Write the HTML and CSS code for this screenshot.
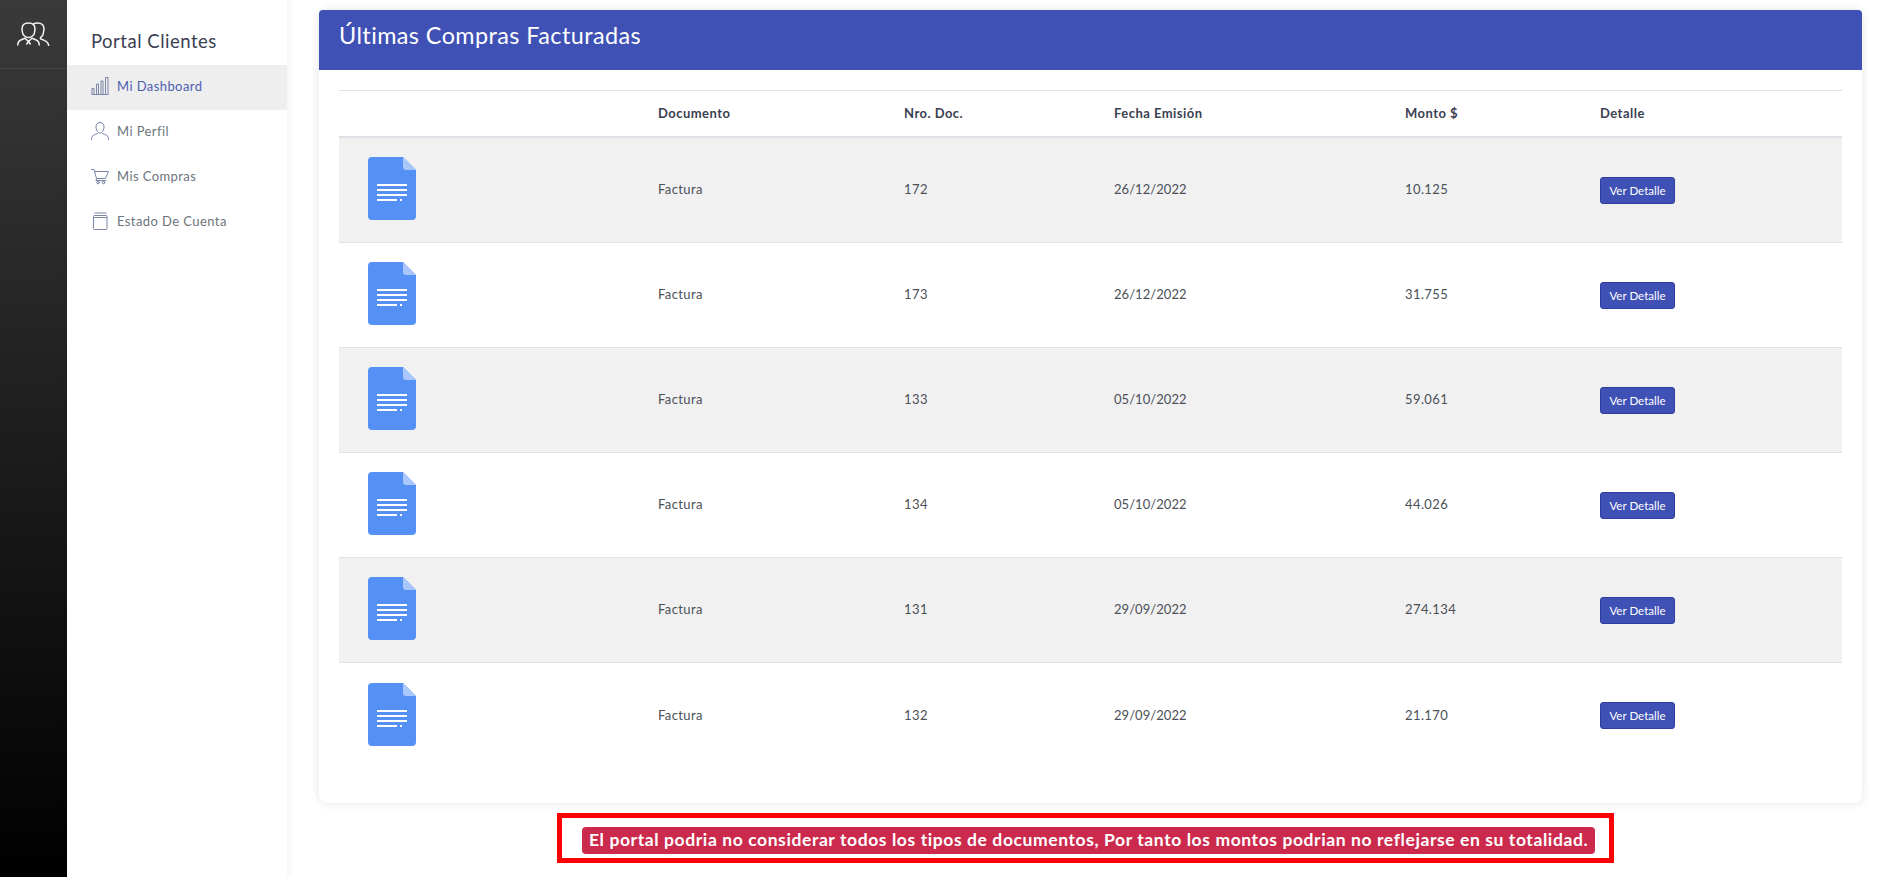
FILE: index.html
```html
<!DOCTYPE html>
<html lang="es">
<head>
<meta charset="utf-8">
<title>Portal Clientes</title>
<link rel="stylesheet" href="styles.css">
</head>
<body>
<svg class="defs" width="0" height="0" aria-hidden="true">
  <symbol id="doc" viewBox="0 0 48 63">
    <path d="M4 0H35L48 13V59a4 4 0 0 1-4 4H4a4 4 0 0 1-4-4V4a4 4 0 0 1 4-4Z" fill="#5591f5"/>
    <path d="M35 0L48 13H38a3 3 0 0 1-3-3Z" fill="#a9c7fa"/>
    <path d="M9 27H39V29H9ZM9 32H39V34H9ZM9 37H39V39H9ZM9 42H29V44H9ZM32 42H34V44H32Z" fill="#fff"/>
  </symbol>
</svg>
<div class="app">
  <aside class="rail">
    <div class="rail-logo">
      <svg class="rail-icon" viewBox="0 0 33 24" fill="none" stroke="#f2f2f2" stroke-width="1.500" stroke-linecap="round" stroke-linejoin="round">
        <path d="M11.500 1C7.500 1 5 3 5 7c0 1.500.5 2.500.5 3.500 0 2 2.500 5 6 5s6-3 6-5c0-1 .5-2 .5-3.500 0-4-2.500-6-6.500-6Z"/>
        <path d="M.8 23c0-3 1.500-4.500 3.500-5.200l3.700-1.600 3.500 3.300 3.500-3.300 3.700 1.600c2 .7 3.500 2.200 3.500 5.200"/>
        <path d="M11.500 19.500l-1.800 2.500M11.500 19.500l1.800 2.500"/>
        <path d="M16.500 2c1.200-.7 2.500-1 4-1 4 0 6.500 2 6.500 6 0 1.500-.5 2.500-.5 3.500 0 1.800-1.200 3.700-3 5v1.200l3.200 1.400c2.800 1.200 5 2.700 5 5.900"/>
      </svg>
    </div>
  </aside>
  <nav class="sidebar">
    <h1 class="brand">Portal Clientes</h1>
    <ul class="menu">
      <li class="menu-item active">
        <svg class="menu-icon" viewBox="0 0 18 18" fill="none" stroke="#7d86a8" stroke-width="1"><path d="M.5 17.500h17M1 17.500v-6h2v6M5.500 17.500V7h2v10.500M10 17.500V4h2v13.500M14.500 17.500V.5h2.500v17"/></svg>
        <span>Mi Dashboard</span>
      </li>
      <li class="menu-item">
        <svg class="menu-icon" viewBox="0 0 18 18" fill="none" stroke="#7d86a8" stroke-width="1" stroke-linecap="round"><path d="M9 .5C6 .5 5 2.500 5 5c0 2.500 1.500 6 4 6s4-3.500 4-6c0-2.500-1-4.500-4-4.500Z"/><path d="M.5 17.500c0-3 1-4 3-4.700l3-1.300M17.500 17.500c0-3-1-4-3-4.700l-3-1.300"/></svg>
        <span>Mi Perfil</span>
      </li>
      <li class="menu-item">
        <svg class="menu-icon" viewBox="0 0 18 18" fill="none" stroke="#7d86a8" stroke-width="1" stroke-linecap="round" stroke-linejoin="round"><path d="M.5 2.500H3l2.500 9h9l3-7H4"/><path d="M5.500 11.500l-.5 2h10"/><circle cx="7" cy="15.500" r="1.300"/><circle cx="12.500" cy="15.500" r="1.300"/></svg>
        <span>Mis Compras</span>
      </li>
      <li class="menu-item">
        <svg class="menu-icon" viewBox="0 0 18 18" fill="none" stroke="#7d86a8" stroke-width="1"><rect x="2.500" y="3.500" width="13.500" height="14" rx="1"/><path d="M3.500 1h12M2.500 5.500H16"/></svg>
        <span>Estado De Cuenta</span>
      </li>
    </ul>
  </nav>
  <main class="main">
    <section class="card">
      <header class="card-head">Últimas Compras Facturadas</header>
      <div class="card-body">
        <table class="grid">
          <colgroup>
            <col class="c-icon"><col class="c-doc"><col class="c-nro"><col class="c-date"><col class="c-amount"><col class="c-action">
          </colgroup>
          <thead>
            <tr><th></th><th>Documento</th><th>Nro. Doc.</th><th>Fecha Emisión</th><th>Monto $</th><th>Detalle</th></tr>
          </thead>
          <tbody>
            <tr><td class="cell-icon"><svg class="doc"><use href="#doc"/></svg></td><td>Factura</td><td>172</td><td class="cell-date">26/12/2022</td><td>10.125</td><td class="cell-action"><a class="btn">Ver Detalle</a></td></tr>
            <tr><td class="cell-icon"><svg class="doc"><use href="#doc"/></svg></td><td>Factura</td><td>173</td><td class="cell-date">26/12/2022</td><td>31.755</td><td class="cell-action"><a class="btn">Ver Detalle</a></td></tr>
            <tr><td class="cell-icon"><svg class="doc"><use href="#doc"/></svg></td><td>Factura</td><td>133</td><td class="cell-date">05/10/2022</td><td>59.061</td><td class="cell-action"><a class="btn">Ver Detalle</a></td></tr>
            <tr><td class="cell-icon"><svg class="doc"><use href="#doc"/></svg></td><td>Factura</td><td>134</td><td class="cell-date">05/10/2022</td><td>44.026</td><td class="cell-action"><a class="btn">Ver Detalle</a></td></tr>
            <tr><td class="cell-icon"><svg class="doc"><use href="#doc"/></svg></td><td>Factura</td><td>131</td><td class="cell-date">29/09/2022</td><td>274.134</td><td class="cell-action"><a class="btn">Ver Detalle</a></td></tr>
            <tr><td class="cell-icon"><svg class="doc"><use href="#doc"/></svg></td><td>Factura</td><td>132</td><td class="cell-date">29/09/2022</td><td>21.170</td><td class="cell-action"><a class="btn">Ver Detalle</a></td></tr>
          </tbody>
        </table>
      </div>
    </section>
    <div class="notice"><span class="badge">El portal podria no considerar todos los tipos de documentos, Por tanto los montos podrian no reflejarse en su totalidad.</span></div>
  </main>
</div>
</body>
</html>
```
FILE: styles.css
```css
* { box-sizing: border-box; }
html, body { margin: 0; height: 100%; overflow: hidden; }
body { font-family: "Lato", "Noto Sans", sans-serif; color: #495057; background: #fff; }
.defs { position: absolute; }
.app { display: flex; height: 877px; }

.rail { width: 67px; flex: none; background: linear-gradient(#3a3a3a, #000); }
.rail-logo { height: 69px; border-bottom: 1px solid #444; display: flex; justify-content: center; padding-top: 22px; }
.rail-icon { width: 33px; height: 24px; }

.sidebar { width: 220px; flex: none; background: #fff; box-shadow: 2px 0 8px rgba(0,0,0,.06); }
.brand { margin: 0; height: 65px; padding: 29px 0 0 24px; font-size: 18.500px; line-height: 24px; font-weight: 400; color: #3b4052; letter-spacing: .5px; }
.menu { list-style: none; margin: 0; padding: 0; }
.menu-item { height: 44.800px; display: flex; align-items: center; gap: 8px; padding: 0 0 2px 24px; font-size: 13px; color: #6c757d; letter-spacing: .42px; }
.menu-item.active { background: #eee; color: #4d5eb0; }
.menu-icon { width: 18px; height: 18px; flex: none; }

.main { flex: 1; padding: 10px 25px 0 32px; min-width: 0; }
.card { height: 793px; border-radius: 8px; background: #fff; box-shadow: 0 0 10px rgba(33,37,41,.12); }
.card-head { height: 60px; background: #3f51b5; color: #fff; font-size: 23.400px; line-height: 28px; padding: 11px 20px 0; border-radius: 4px 4px 0 0; letter-spacing: .42px; }
.card-body { padding: 20px 20px 0; }

.grid { width: 1503px; table-layout: fixed; border-collapse: separate; border-spacing: 0; font-size: 13px; letter-spacing: .4px; }
.c-icon { width: 307px; }
.c-doc { width: 246px; }
.c-nro { width: 210px; }
.c-date { width: 291px; }
.c-amount { width: 195px; }
.c-action { width: 254px; }
.grid th { height: 48px; padding: 0 12px 2px; text-align: left; font-weight: 700; color: #3b4052; letter-spacing: .47px; border-top: 1px solid #dee2e6; border-bottom: 2px solid #dee2e6; }
.grid td { height: 105px; padding: 0 12px 2px; color: #495057; border-bottom: 1px solid #dee2e6; }
.grid tbody tr:nth-child(odd) td { background: #f1f1f2; }
.grid tbody tr:last-child td { border-bottom: 0; }
.grid .cell-icon { padding: 0 0 3px 29px; }
.grid .cell-date { letter-spacing: .05px; }
.grid .cell-action { padding-bottom: 0; }
.doc { display: block; width: 48px; height: 63px; }
.btn { display: block; height: 27px; width: 75px; line-height: 25px; text-align: center; font-size: 11.500px; letter-spacing: .03px; color: #fff; background: #3f51b5; border: 1px solid #303f9f; border-radius: 3px; }

.notice { margin: 10px 0 0 238px; width: 1057px; height: 50px; border: 5px solid #f00; display: flex; align-items: flex-start; padding: 9px 0 0 20px; }
.badge { height: 27px; line-height: 26px; padding: 0 7px; border-radius: 4px; background: #cb2a4d; color: #fff; font-size: 17.500px; font-weight: 700; white-space: nowrap; letter-spacing: .59px; }
```
